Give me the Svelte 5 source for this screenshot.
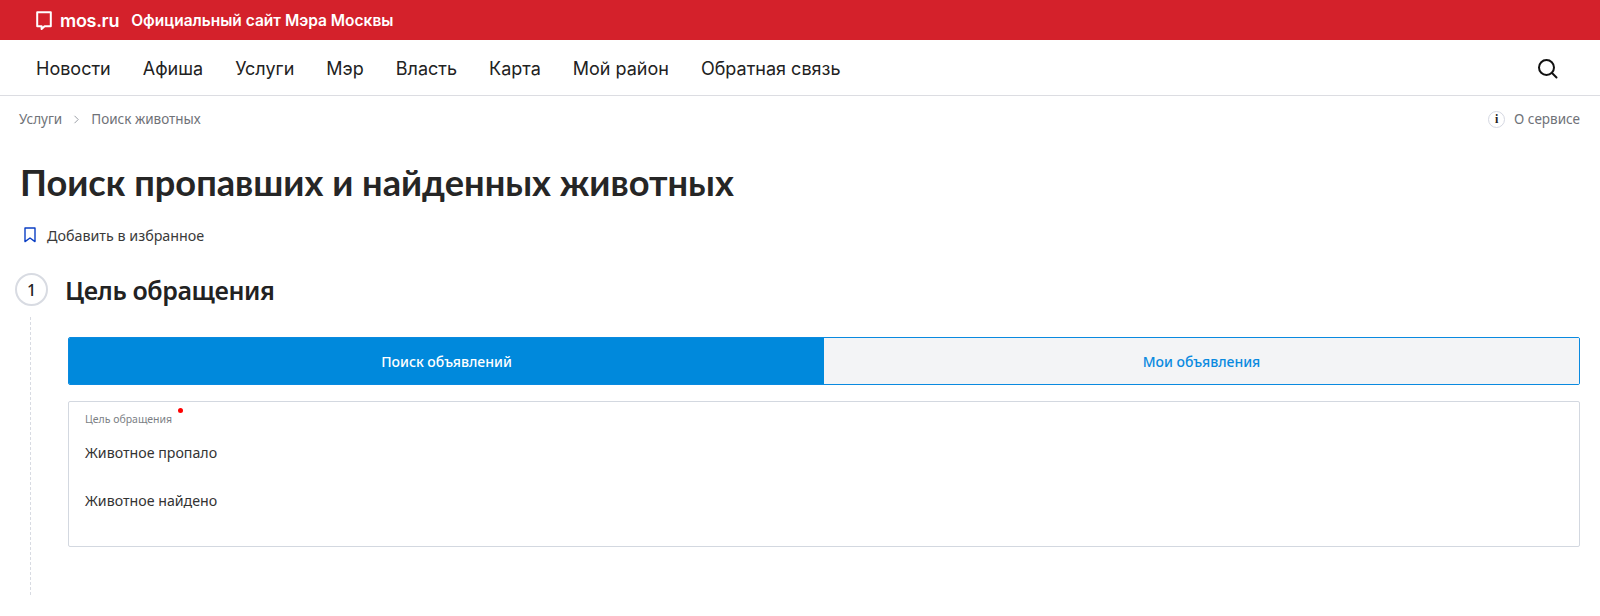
<script>
  const nav = ['Новости', 'Афиша', 'Услуги', 'Мэр', 'Власть', 'Карта', 'Мой район', 'Обратная связь'];
</script>

<div class="page">
  <header class="topbar">
    <svg class="logo" width="16" height="20" viewBox="0 0 16 20" fill="none">
      <path d="M1.2 1.2H14.8V15.2H8.6L5.6 18V15.2H1.2Z" stroke="#fff" stroke-width="2" stroke-linejoin="round" />
    </svg>
    <span class="brand">mos.ru</span>
    <span class="tagline">Официальный сайт Мэра Москвы</span>
  </header>

  <nav class="nav">
    <ul>
      {#each nav as item}
        <li>{item}</li>
      {/each}
    </ul>
    <svg width="21" height="21" viewBox="0 0 21 21" fill="none" stroke="#111" stroke-width="2">
      <circle cx="9.5" cy="9.5" r="7.5" />
      <path d="M15 15L19.5 19.5" stroke-linecap="round" />
    </svg>
  </nav>

  <div class="crumbs">
    <div class="trail">
      <span>Услуги</span>
      <svg width="7" height="9" viewBox="0 0 7 9" fill="none" stroke="#9a9ea5" stroke-width="1"><path d="M1.5 .8L5.2 4.5L1.5 8.2" /></svg>
      <span>Поиск животных</span>
    </div>
    <div class="about">
      <span class="info">i</span>
      <span>О сервисе</span>
    </div>
  </div>

  <h1>Поиск пропавших и найденных животных</h1>

  <div class="fav">
    <svg width="12" height="16" viewBox="0 0 12 16" fill="none" stroke="#0b3fc4" stroke-width="1.4">
      <path d="M1 1H11V14.6L6 11L1 14.6Z" stroke-linejoin="round" />
    </svg>
    <span>Добавить в избранное</span>
  </div>

  <section class="step">
    <div class="step-head">
      <span class="num">1</span>
      <h2>Цель обращения</h2>
    </div>
    <div class="step-body">
      <div class="tabs">
        <div class="tab active">Поиск объявлений</div>
        <div class="tab">Мои объявления</div>
      </div>
      <div class="field">
        <div class="label">Цель обращения<i class="req"></i></div>
        <div class="option">Животное пропало</div>
        <div class="option">Животное найдено</div>
      </div>
    </div>
  </section>
</div>

<style>
  :global(body) {
    margin: 0;
    background: #fff;
  }
  .page {
    width: 1600px;
    height: 616px;
    overflow: hidden;
    font-family: "Noto Sans", sans-serif;
    color: #222;
  }
  .topbar {
    height: 40px;
    background: #d4212b;
    color: #fff;
    display: flex;
    align-items: center;
    padding-left: 36px;
    box-sizing: border-box;
    font-family: Inter, sans-serif;
    font-weight: 600;
  }
  .logo {
    margin-right: 8px;
    margin-top: 2px;
  }
  .brand {
    font-size: 18px;
    letter-spacing: -0.3px;
    margin-right: 12px;
  }
  .tagline {
    font-size: 15.5px;
  }
  .nav {
    height: 56px;
    border-bottom: 1px solid #dcdde2;
    box-sizing: border-box;
    display: flex;
    align-items: center;
    justify-content: space-between;
    padding: 1px 42px 0 36px;
  }
  .nav ul {
    list-style: none;
    margin: 0;
    padding: 0;
    display: flex;
    gap: 32px;
    font-family: Inter, sans-serif;
    font-size: 18px;
    color: #222;
  }
  .crumbs {
    display: flex;
    justify-content: space-between;
    align-items: center;
    padding: 13px 20px 0 19px;
    height: 20px;
    font-size: 13.5px;
    color: #6f7278;
  }
  .trail {
    display: flex;
    align-items: center;
    gap: 11px;
  }
  .about {
    display: flex;
    align-items: center;
    gap: 9px;
  }
  .info {
    width: 17px;
    height: 17px;
    box-sizing: border-box;
    border: 1px solid #d5d8e2;
    border-radius: 50%;
    display: flex;
    align-items: center;
    justify-content: center;
    font-family: "Liberation Serif", serif;
    font-size: 12px;
    font-weight: 700;
    color: #222;
  }
  h1 {
    margin: 30px 0 0 20px;
    font-family: Lato, sans-serif;
    font-size: 36.2px;
    line-height: 46px;
    font-weight: 700;
    color: #262626;
  }
  .fav {
    display: flex;
    align-items: center;
    gap: 11px;
    margin: 20px 0 0 24px;
    height: 20px;
    font-size: 14.3px;
    color: #3a3a3a;
  }
  .step {
    margin-top: 28px;
    padding-left: 15px;
  }
  .step-head {
    display: flex;
    align-items: center;
    gap: 17px;
    height: 33px;
  }
  .num {
    width: 33px;
    height: 33px;
    box-sizing: border-box;
    border: 2px solid #d8dbe2;
    border-radius: 50%;
    display: flex;
    align-items: center;
    justify-content: center;
    font-size: 16px;
    font-weight: 500;
    color: #222;
  }
  h2 {
    margin: 0;
    font-size: 25px;
    font-weight: 600;
    color: #222;
    letter-spacing: -0.4px;
  }
  .step-body {
    margin: 11px 0 0 15px;
    border-left: 1px dashed #d8dbe2;
    padding: 20px 20px 43px 37px;
    height: 215px;
  }
  .tabs {
    display: flex;
    height: 48px;
    box-sizing: border-box;
    border: 1px solid #0a8ae0;
    border-radius: 2px;
    overflow: hidden;
    font-size: 14px;
    font-weight: 500;
  }
  .tab {
    flex: 1;
    display: flex;
    align-items: center;
    justify-content: center;
    background: #f3f4f6;
    color: #0a8ae0;
  }
  .tab.active {
    flex: 0 0 755px;
    background: #0089dc;
    color: #fff;
  }
  .field {
    margin-top: 16px;
    height: 146px;
    box-sizing: border-box;
    border: 1px solid #d3d8e0;
    border-radius: 2px;
    padding: 10px 16px;
    color: #333;
  }
  .label {
    font-size: 10.5px;
    line-height: 14px;
    color: #7c7f85;
    position: relative;
    width: max-content;
  }
  .req {
    position: absolute;
    right: -11px;
    top: -4px;
    width: 5px;
    height: 5px;
    border-radius: 50%;
    background: #f00;
  }
  .option {
    font-size: 14.2px;
    line-height: 20px;
    margin-top: 17px;
  }
  .option + .option {
    margin-top: 28px;
  }
</style>
